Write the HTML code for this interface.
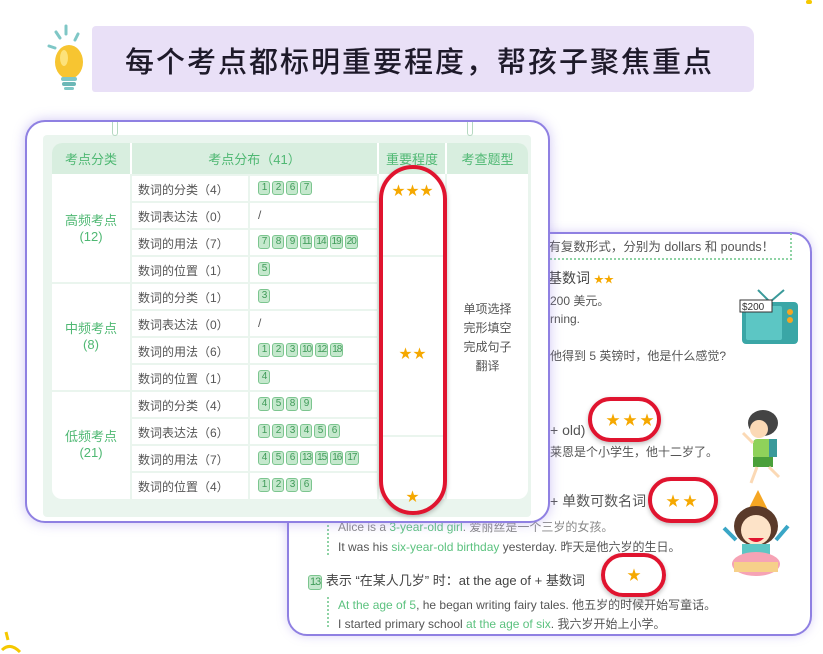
<!DOCTYPE html>
<html><head><meta charset="utf-8">
<style>
*{margin:0;padding:0;box-sizing:border-box}
body{width:823px;height:654px;background:#fff;position:relative;overflow:hidden;font-family:"Liberation Sans","Noto Sans CJK SC",sans-serif;color:#444}
.a{position:absolute;white-space:nowrap}
.banner{left:92px;top:26px;width:662px;height:66px;background:#e9e0f7;border-radius:4px 10px 6px 3px}
.title{left:125px;top:39px;font-size:29px;color:#1e1a2a;letter-spacing:2px;font-family:"Noto Sans CJK SC",sans-serif;font-weight:500}
.back{left:287px;top:232px;width:525px;height:404px;border:2px solid #8f80e2;border-radius:20px;background:#fff;box-shadow:0 0 10px rgba(150,130,230,.35)}
.front{left:25px;top:120px;width:525px;height:403px;border:2px solid #8f80e2;border-radius:20px;background:#fff;box-shadow:0 0 12px rgba(150,130,230,.45)}
.panel{left:43px;top:135px;width:488px;height:382px;background:#eaf5ee;border-radius:4px}
.tbl{left:52px;top:143px;width:476px;height:356px;background:#fff;border-radius:10px;overflow:hidden}
.hd{top:0;height:31px;background:#d8eedf;color:#4fb873;font-size:13px;display:flex;align-items:center;justify-content:center}
.row{width:247px;height:27px;border-top:2px solid #eaf5ee;font-size:12px;color:#555}
.row span.l{position:absolute;left:8px;top:5px}
.row .bd{position:absolute;left:128px;top:5px;display:flex;gap:2px}
.b{display:inline-block;height:14px;min-width:12px;padding:0 1px;border:1px solid #7cc58f;background:#c5e8cd;color:#3f9a58;font-size:10px;line-height:12px;text-align:center;border-radius:3px;font-style:normal;letter-spacing:-1px}
.vl{position:absolute;top:31px;width:2px;height:325px;background:#eaf5ee}
.grp{left:0;width:78px;color:#4fb873;font-size:13px;text-align:center;line-height:16px}
.star{color:#f5a800}
.oval{border:4px solid #e0142f;border-radius:40px;box-shadow:0 2px 5px rgba(0,0,0,.25)}
.t{font-size:12px;color:#555}
.g{color:#5cc27f}
</style></head><body>

<div class="a banner"></div>
<svg class="a" style="left:44px;top:22px" width="58" height="72" viewBox="0 0 58 72">
<g stroke="#7fc7c6" stroke-width="3" stroke-linecap="round"><line x1="22" y1="4" x2="22" y2="12"/><line x1="12" y1="10" x2="16" y2="16"/><line x1="34" y1="12" x2="31" y2="18"/><line x1="5" y1="24" x2="11" y2="26"/></g>
<ellipse cx="25" cy="40" rx="14" ry="17" fill="#f7c531"/><ellipse cx="20" cy="36" rx="4" ry="8" fill="#fde27a"/>
<rect x="17" y="55" width="16" height="4" rx="2" fill="#7fc7c6"/><rect x="18" y="60" width="14" height="4" rx="2" fill="#6bb7b6"/><rect x="20" y="65" width="10" height="3" rx="1.5" fill="#7fc7c6"/>
</svg>
<div class="a title">每个考点都标明重要程度，帮孩子聚焦重点</div>

<div class="a back"></div>
<div class="a" style="left:530px;top:233px;width:262px;height:27px;border-bottom:2px dotted #8fd3a5;border-right:2px dotted #8fd3a5"></div>
<div class="a t" style="left:538px;top:236px;font-size:12.5px">d 有复数形式，分别为 dollars 和 pounds！</div>
<div class="a" style="left:548px;top:268px;font-size:14px;color:#444">基数词 <span class="star" style="font-size:10px">★★</span></div>
<div class="a t" style="left:550px;top:292px">200 美元。</div>
<div class="a t" style="left:550px;top:312px">rning.</div>
<div class="a t" style="left:550px;top:347px">他得到 5 英镑时，他是什么感觉?</div>
<div class="a" style="left:550px;top:422px;font-size:14px;color:#555">+ old)</div>
<div class="a t" style="left:550px;top:443px">莱恩是个小学生，他十二岁了。</div>
<div class="a" style="left:550px;top:491px;font-size:14px;color:#555">+ 单数可数名词</div>
<div class="a t" style="left:338px;top:518px;color:#888">Alice is a <span class="g">3-year-old girl</span>. 爱丽丝是一个三岁的女孩。</div>
<div class="a t" style="left:338px;top:538px">It was his <span class="g">six-year-old birthday</span> yesterday. 昨天是他六岁的生日。</div>
<div class="a" style="left:308px;top:570px;font-size:13px;color:#444"><span class="b" style="font-size:11px;height:15px;line-height:13px">13</span> 表示 “在某人几岁” 时：at the age of + 基数词</div>
<div class="a t" style="left:338px;top:596px"><span class="g">At the age of 5</span>, he began writing fairy tales. 他五岁的时候开始写童话。</div>
<div class="a t" style="left:338px;top:615px">I started primary school <span class="g">at the age of six</span>. 我六岁开始上小学。</div>
<div class="a" style="left:327px;top:525px;height:30px;border-left:2px dotted #8fd3a5"></div>
<div class="a" style="left:327px;top:597px;height:30px;border-left:2px dotted #8fd3a5"></div>

<div class="a oval" style="left:588px;top:397px;width:73px;height:45px"></div>
<div class="a star" style="left:606px;top:410px;font-size:14px;letter-spacing:3px">★★★</div>
<div class="a oval" style="left:648px;top:477px;width:70px;height:46px"></div>
<div class="a star" style="left:666px;top:491px;font-size:14px;letter-spacing:3px">★★</div>
<div class="a oval" style="left:601px;top:553px;width:65px;height:44px"></div>
<div class="a star" style="left:627px;top:565px;font-size:14px">★</div>

<svg class="a" style="left:738px;top:288px" width="64" height="60" viewBox="0 0 64 60">
<line x1="20" y1="2" x2="32" y2="14" stroke="#3a9a9a" stroke-width="2"/><line x1="46" y1="2" x2="32" y2="14" stroke="#3a9a9a" stroke-width="2"/>
<rect x="4" y="14" width="56" height="42" rx="4" fill="#3aa6a6"/><rect x="8" y="18" width="36" height="34" rx="2" fill="#5cc6c4"/>
<circle cx="52" cy="24" r="3" fill="#f5a623"/><circle cx="52" cy="32" r="3" fill="#f5a623"/>
<rect x="2" y="12" width="32" height="12" fill="#fff" stroke="#333"/><text x="4" y="22" font-size="10" fill="#333" font-family="Liberation Sans">$200</text>
</svg>
<svg class="a" style="left:735px;top:405px" width="55" height="82" viewBox="0 0 55 82">
<ellipse cx="28" cy="18" rx="15" ry="13" fill="#444"/><circle cx="24" cy="24" r="9" fill="#fbd9b5"/>
<rect x="18" y="34" width="20" height="20" rx="4" fill="#8fd25a"/><rect x="34" y="34" width="8" height="18" fill="#3a9a9a"/>
<rect x="18" y="52" width="20" height="10" fill="#4aa03a"/><line x1="22" y1="62" x2="16" y2="78" stroke="#fbd9b5" stroke-width="3"/><line x1="34" y1="62" x2="44" y2="72" stroke="#fbd9b5" stroke-width="3"/>
<line x1="18" y1="38" x2="8" y2="28" stroke="#fbd9b5" stroke-width="3"/>
</svg>
<svg class="a" style="left:718px;top:488px" width="76" height="92" viewBox="0 0 76 92">
<polygon points="40,2 30,22 50,22" fill="#f5a623"/>
<ellipse cx="38" cy="38" rx="22" ry="20" fill="#5a3a2a"/><circle cx="38" cy="42" r="15" fill="#fde3c8"/>
<path d="M30 50 Q38 58 46 50" fill="#e0142f"/>
<path d="M6 40 L18 52 M70 38 L58 52" stroke="#3aa6c6" stroke-width="4"/>
<rect x="24" y="56" width="28" height="12" fill="#5cc6c4"/>
<ellipse cx="38" cy="76" rx="24" ry="12" fill="#f6a3b5"/><rect x="16" y="74" width="44" height="10" fill="#f6d08a"/>
</svg>

<div class="a front"></div>
<div class="a panel"></div>
<div class="a" style="left:112px;top:122px;width:6px;height:14px;border:1px solid #b5d8c0;border-radius:0 0 4px 4px;border-top:none"></div>
<div class="a" style="left:467px;top:122px;width:6px;height:14px;border:1px solid #b5d8c0;border-radius:0 0 4px 4px;border-top:none"></div>
<div class="a tbl">
  <div class="a hd" style="left:0;width:78px">考点分类</div>
  <div class="a hd" style="left:80px;width:245px">考点分布（41）</div>
  <div class="a hd" style="left:327px;width:66px">重要程度</div>
  <div class="a hd" style="left:395px;width:81px">考查题型</div>
  <div class="vl" style="left:78px"></div>
  <div class="vl" style="left:196px"></div>
  <div class="vl" style="left:325px"></div>
  <div class="vl" style="left:393px"></div>
  <div class="a" style="left:0;top:139px;width:78px;height:2px;background:#eaf5ee"></div>
  <div class="a" style="left:0;top:247px;width:78px;height:2px;background:#eaf5ee"></div>
  <div class="a" style="left:325px;top:112px;width:68px;height:2px;background:#eaf5ee"></div>
  <div class="a" style="left:325px;top:292px;width:68px;height:2px;background:#eaf5ee"></div>
  <div class="a grp" style="top:70px">高频考点<br>(12)</div>
  <div class="a grp" style="top:178px">中频考点<br>(8)</div>
  <div class="a grp" style="top:286px">低频考点<br>(21)</div>
  <div class="a star" style="left:340px;top:37px;font-size:13px;letter-spacing:1px">★★★</div>
  <div class="a star" style="left:347px;top:200px;font-size:13px;letter-spacing:1px">★★</div>
  <div class="a" style="left:395px;top:157px;width:81px;text-align:center;font-size:12px;line-height:19px;color:#555;white-space:normal">单项选择<br>完形填空<br>完成句子<br>翻译</div>
</div>
<div class="a" style="left:0;top:0">
<div class="a row" style="top:174px;left:130px"><span class="l">数词的分类（4）</span><span class="bd"><i class="b">1</i><i class="b">2</i><i class="b">6</i><i class="b">7</i></span></div>
<div class="a row" style="top:201px;left:130px"><span class="l">数词表达法（0）</span><span class="bd">/</span></div>
<div class="a row" style="top:228px;left:130px"><span class="l">数词的用法（7）</span><span class="bd"><i class="b">7</i><i class="b">8</i><i class="b">9</i><i class="b">11</i><i class="b">14</i><i class="b">19</i><i class="b">20</i></span></div>
<div class="a row" style="top:255px;left:130px"><span class="l">数词的位置（1）</span><span class="bd"><i class="b">5</i></span></div>
<div class="a row" style="top:282px;left:130px"><span class="l">数词的分类（1）</span><span class="bd"><i class="b">3</i></span></div>
<div class="a row" style="top:309px;left:130px"><span class="l">数词表达法（0）</span><span class="bd">/</span></div>
<div class="a row" style="top:336px;left:130px"><span class="l">数词的用法（6）</span><span class="bd"><i class="b">1</i><i class="b">2</i><i class="b">3</i><i class="b">10</i><i class="b">12</i><i class="b">18</i></span></div>
<div class="a row" style="top:363px;left:130px"><span class="l">数词的位置（1）</span><span class="bd"><i class="b">4</i></span></div>
<div class="a row" style="top:390px;left:130px"><span class="l">数词的分类（4）</span><span class="bd"><i class="b">4</i><i class="b">5</i><i class="b">8</i><i class="b">9</i></span></div>
<div class="a row" style="top:417px;left:130px"><span class="l">数词表达法（6）</span><span class="bd"><i class="b">1</i><i class="b">2</i><i class="b">3</i><i class="b">4</i><i class="b">5</i><i class="b">6</i></span></div>
<div class="a row" style="top:444px;left:130px"><span class="l">数词的用法（7）</span><span class="bd"><i class="b">4</i><i class="b">5</i><i class="b">6</i><i class="b">13</i><i class="b">15</i><i class="b">16</i><i class="b">17</i></span></div>
<div class="a row" style="top:471px;left:130px"><span class="l">数词的位置（4）</span><span class="bd"><i class="b">1</i><i class="b">2</i><i class="b">3</i><i class="b">6</i></span></div>
</div>
<div class="a oval" style="left:379px;top:165px;width:68px;height:350px"></div>
<div class="a star" style="left:406px;top:486px;font-size:13px">★</div>

<svg class="a" style="left:0;top:630px" width="40" height="24"><path d="M6 2 L8 10 M2 20 Q10 12 20 22" stroke="#f5c800" stroke-width="3" fill="none"/></svg>
<div class="a" style="left:806px;top:0;width:6px;height:4px;background:#f5c800;border-radius:2px"></div>
</body></html>
